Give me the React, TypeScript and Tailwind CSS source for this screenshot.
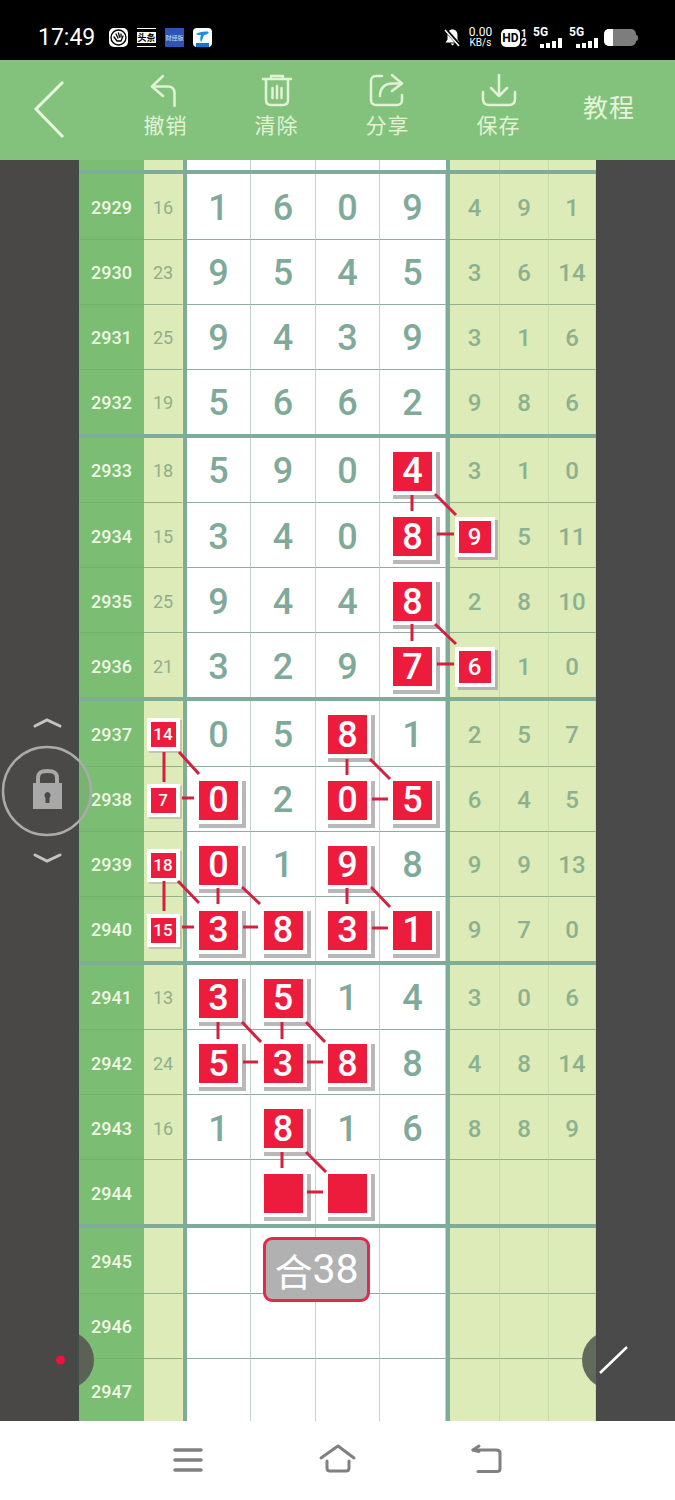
const cjk = "font-['Noto_Sans_CJK_SC',sans-serif]"

// "*" marks a red badge, a lone "*" is an empty badge
const groups: string[][][] = [
  [
    ["2929", "16", "1", "6", "0", "9", "4", "9", "1"],
    ["2930", "23", "9", "5", "4", "5", "3", "6", "14"],
    ["2931", "25", "9", "4", "3", "9", "3", "1", "6"],
    ["2932", "19", "5", "6", "6", "2", "9", "8", "6"],
  ],
  [
    ["2933", "18", "5", "9", "0", "*4", "3", "1", "0"],
    ["2934", "15", "3", "4", "0", "*8", "*9", "5", "11"],
    ["2935", "25", "9", "4", "4", "*8", "2", "8", "10"],
    ["2936", "21", "3", "2", "9", "*7", "*6", "1", "0"],
  ],
  [
    ["2937", "*14", "0", "5", "*8", "1", "2", "5", "7"],
    ["2938", "*7", "*0", "2", "*0", "*5", "6", "4", "5"],
    ["2939", "*18", "*0", "1", "*9", "8", "9", "9", "13"],
    ["2940", "*15", "*3", "*8", "*3", "*1", "9", "7", "0"],
  ],
  [
    ["2941", "13", "*3", "*5", "1", "4", "3", "0", "6"],
    ["2942", "24", "*5", "*3", "*8", "8", "4", "8", "14"],
    ["2943", "16", "1", "*8", "1", "6", "8", "8", "9"],
    ["2944", "", "", "*", "*", "", "", "", ""],
  ],
  [
    ["2945", "", "", "", "", "", "", "", ""],
    ["2946", "", "", "", "", "", "", "", ""],
    ["2947", "", "", "", "", "", "", "", ""],
  ],
]

// connector segments in page coordinates: x1, y1, x2, y2
const links = [
  [412, 495, 412, 511], [435, 494, 456, 515], [437, 534, 454, 534],
  [412, 624, 412, 641], [435, 624, 456, 644], [437, 664, 454, 664],
  [164, 752, 164, 782], [179, 752, 199, 774], [182, 798, 194, 798],
  [347, 759, 347, 775], [370, 759, 390, 779], [372, 799, 388, 799],
  [164, 881, 164, 911], [178, 881, 199, 903], [182, 927, 194, 927],
  [218, 888, 218, 904], [242, 887, 260, 904], [243, 927, 258, 927],
  [347, 888, 347, 904], [371, 887, 390, 907], [372, 928, 388, 928],
  [218, 1022, 218, 1039], [242, 1022, 261, 1042], [243, 1062, 258, 1062],
  [282, 1022, 282, 1039], [306, 1022, 325, 1042], [307, 1062, 323, 1062],
  [282, 1152, 282, 1168], [306, 1152, 326, 1172], [307, 1192, 323, 1192],
]

function Badge({ text, size }: { text: string; size: "sm" | "md" | "lg" }) {
  const sizes = {
    sm: "w-[33px] h-[33px] text-[17px] shadow-[2px_2px_0_#c2c6b4]",
    md: "w-[40px] h-[40px] text-[24px] shadow-[3px_3px_0_#b4b6ae]",
    lg: "w-[47px] h-[47px] text-[36px] shadow-[4px_4px_0_#b8b8b8]",
  }
  return (
    <div className={"relative z-10 flex shrink-0 items-center justify-center border-4 border-white bg-[#ee1c3c] font-medium leading-none text-white " + sizes[size]}>
      {text}
    </div>
  )
}

function Cell({ value, kind, line }: { value: string; kind: "sum" | "main" | "side"; line: boolean }) {
  const hit = value.startsWith("*")
  const styles = {
    sum: "bg-[#dcebb8] text-[18px] text-[#8fae8c] border-r-[#e6eeb4]",
    main: "bg-white text-[36px] font-medium text-[#7fa99a] border-r-[#c4d2ce]",
    side: "bg-[#dcebb8] text-[24px] font-medium text-[#8bb190] border-r-[#c5dca8]",
  }
  return (
    <div className={"flex items-center justify-center overflow-visible border-r pt-[3px] leading-none " + styles[kind] + (line ? (kind === "main" ? " border-t border-t-[#8eac9f]" : " border-t border-t-[#90b08a]") : "")}>
      {hit ? <Badge text={value.slice(1)} size={kind === "sum" ? "sm" : kind === "side" ? "md" : "lg"} /> : value}
    </div>
  )
}

const gridCols = "grid grid-cols-[65px_39px_4px_64px_65px_64px_66px_4px_50px_49px_47px]"

function Row({ row, line }: { row: string[]; line: boolean }) {
  const [num, sum, a, b, c, d, x, y, z] = row
  return (
    <div className={gridCols + " h-[64.875px]"}>
      <div className={"flex items-center justify-center bg-[#7cbd74] pt-[3px] text-[18px] font-medium leading-none text-[#eef8e2]" + (line ? " border-t border-t-[#74b16e]" : "")}>
        {num}
      </div>
      <Cell value={sum} kind="sum" line={line} />
      <div className="bg-[#7fac98]" />
      <Cell value={a} kind="main" line={line} />
      <Cell value={b} kind="main" line={line} />
      <Cell value={c} kind="main" line={line} />
      <Cell value={d} kind="main" line={line} />
      <div className="bg-[#7fac98]" />
      <Cell value={x} kind="side" line={line} />
      <Cell value={y} kind="side" line={line} />
      <Cell value={z} kind="side" line={line} />
    </div>
  )
}

function Spacer() {
  return (
    <div className={gridCols + " h-[10px]"}>
      <div className="bg-[#7cbd74]" />
      <div className="bg-[#dcebb8]" />
      <div className="bg-[#7fac98]" />
      <div className="bg-white border-r border-r-[#c4d2ce]" />
      <div className="bg-white border-r border-r-[#c4d2ce]" />
      <div className="bg-white border-r border-r-[#c4d2ce]" />
      <div className="bg-white" />
      <div className="bg-[#7fac98]" />
      <div className="bg-[#dcebb8] border-r border-r-[#c5dca8]" />
      <div className="bg-[#dcebb8] border-r border-r-[#c5dca8]" />
      <div className="bg-[#dcebb8]" />
    </div>
  )
}

function ToolButton({ label, children }: { label: string; children: React.ReactNode }) {
  return (
    <div className="flex w-[111px] flex-col items-center pt-[14px]">
      <div className="h-[36px] w-[40px]">{children}</div>
      <span className={cjk + " text-[21px] leading-[28px] tracking-[1px] text-[#e3f2d6]"}>{label}</span>
    </div>
  )
}

function Signal() {
  return (
    <div className="flex w-[29px] flex-col">
      <span className="text-[12px] font-bold leading-[11px] text-white">5G</span>
      <div className="flex items-end justify-end gap-[2px]">
        <div className="h-[4px] w-[4px] bg-white" />
        <div className="h-[5px] w-[4px] bg-white" />
        <div className="h-[7px] w-[4px] bg-white" />
        <div className="h-[10px] w-[4px] bg-white" />
      </div>
    </div>
  )
}

function StatusBar() {
  return (
    <div className="flex h-[60px] items-center bg-black pl-[38px] pr-[37px] pt-[15px] text-white">
      <span className="w-[71px] text-[23px] font-normal leading-none">17:49</span>
      <div className="flex items-center gap-[9px]">
        <svg width="19" height="19" viewBox="0 0 19 19">
          <rect width="19" height="19" rx="5" fill="#fff" />
          <circle cx="9.500" cy="9.500" r="7.500" fill="none" stroke="#000" strokeWidth="1.400" />
          <path d="M5 9l3 4h4l2-5M7 6l2 4M9.500 5l1 4M12 6l0 3" fill="none" stroke="#000" strokeWidth="1.300" strokeLinecap="round" />
        </svg>
        <div className="flex h-[19px] w-[19px] flex-col items-center justify-center border-y border-white bg-black">
          <span className={cjk + " bg-white text-[9px] font-bold leading-[11px] text-black"}>头条</span>
        </div>
        <div className={cjk + " flex h-[19px] w-[19px] items-center justify-center overflow-hidden bg-[#2c55b8] text-[6px] leading-none text-[#cfe0ff]"}>财经版</div>
        <svg width="19" height="19" viewBox="0 0 19 19">
          <rect width="19" height="19" rx="4" fill="#fff" />
          <path d="M3 6c3-2 9-3 13-2-1 2-3 3-5 3-1 3-2 5-3 7-1-2-1-4 0-7-2 0-4 0-5-1z" fill="#1590e8" />
          <rect x="3" y="15" width="13" height="4" fill="#1577d0" />
        </svg>
      </div>
      <div className="ml-auto flex items-center">
        <svg width="19" height="19" viewBox="0 0 19 19" className="mr-[6px]">
          <path d="M9.500 1.500c-3.500 0-5 2.500-5 6v4l-2 3h14l-2-3v-4c0-3.500-1.500-6-5-6zM7.500 15.500h4l-2 2z" fill="#fff" />
          <path d="M2 1l15 17" stroke="#000" strokeWidth="3.500" />
          <path d="M2 2l14 16" stroke="#fff" strokeWidth="1.500" />
        </svg>
        <div className="mr-[8px] flex w-[25px] flex-col items-center leading-none">
          <span className="text-[12px] leading-[11px]">0.00</span>
          <span className="text-[10px] leading-[10px]">KB/s</span>
        </div>
        <div className="flex h-[18px] w-[19px] items-center justify-center rounded-[5px] bg-white text-[12px] font-bold text-black">HD</div>
        <div className="ml-[1px] mr-[5px] flex w-[7px] flex-col text-[10px] font-bold leading-[9px]">
          <span>1</span>
          <span>2</span>
        </div>
        <Signal />
        <div className="w-[7px]" />
        <Signal />
        <div className="ml-[6px] flex h-[17px] w-[32px] overflow-hidden rounded-[5px] bg-[#7d7d7d]">
          <div className="w-[9px] bg-white" />
        </div>
        <div className="h-[6px] w-[2px] rounded-r-sm bg-[#7d7d7d]" />
      </div>
    </div>
  )
}

function Header() {
  return (
    <div className="flex h-[100px] items-start bg-[#82c27c]">
      <svg width="110" height="100" viewBox="0 0 110 100" className="shrink-0">
        <path d="M63 22 L36 49 L63 77" fill="none" stroke="#eaf6e0" strokeWidth="3" />
      </svg>
      <ToolButton label="撤销">
        <svg width="40" height="36" viewBox="0 0 40 36" fill="none" stroke="#e3f2d6" strokeWidth="2.500" strokeLinecap="round" strokeLinejoin="round">
          <path d="M17 2 L6 12.500 L17 22" />
          <path d="M6 12.500 H22 C26 12.500 28.500 15 28.500 19 V32" />
        </svg>
      </ToolButton>
      <ToolButton label="清除">
        <svg width="40" height="36" viewBox="0 0 40 36" fill="none" stroke="#e3f2d6" strokeWidth="2.500" strokeLinecap="round" strokeLinejoin="round">
          <path d="M6 5 H34" />
          <path d="M14 5 V2 H26 V5" />
          <path d="M9 6 V26 C9 29.500 11 31 14 31 H26 C29 31 31 29.500 31 26 V6" />
          <path d="M15.500 14 V24 M20 12 V24 M24.500 14 V24" />
        </svg>
      </ToolButton>
      <ToolButton label="分享">
        <svg width="40" height="36" viewBox="0 0 40 36" fill="none" stroke="#e3f2d6" strokeWidth="2.500" strokeLinecap="round" strokeLinejoin="round">
          <path d="M14 2 H8 C5 2 3 4 3 7 V26 C3 29 5 31 8 31 H29 C32 31 34 29 34 26 V21" />
          <path d="M24 1 L34 9.500 L24 17" />
          <path d="M33 9.500 H24 C17 9.500 12 14 12 22" />
        </svg>
      </ToolButton>
      <ToolButton label="保存">
        <svg width="40" height="36" viewBox="0 0 40 36" fill="none" stroke="#e3f2d6" strokeWidth="2.500" strokeLinecap="round" strokeLinejoin="round">
          <path d="M20 1 V21" />
          <path d="M12 14 L20 22 L28 14" />
          <path d="M4 18 V25 C4 29 6 31 10 31 H30 C34 31 36 29 36 25 V18" />
        </svg>
      </ToolButton>
      <span className={cjk + " ml-[29px] pt-[28px] text-[25px] leading-[36px] tracking-[1px] text-[#e6f4da]"}>教程</span>
    </div>
  )
}

function Board() {
  return (
    <div className="relative h-[1261px] overflow-hidden bg-white">
      <div className="flex h-full">
        <div className="w-[79px] shrink-0 border-r-[5px] border-r-[#434a48] bg-[#4a4747]" />
        <div className="relative w-[517px] shrink-0 overflow-hidden">
          <Spacer />
          {groups.map((group, g) => (
            <div key={g}>
              <div className="h-[4px] bg-[#7fac98]" />
              {group.map((row, r) => (
                <Row key={row[0]} row={row} line={r > 0} />
              ))}
            </div>
          ))}
          {/* floating buttons tucked behind the side panels */}
          <div className="absolute left-[-43px] top-[1171px] z-20 h-[58px] w-[58px] rounded-full bg-[#5c6156]" />
          <div className="absolute right-[-44px] top-[1171px] z-20 h-[58px] w-[58px] rounded-full bg-[#626a5c]" />
          <div className="absolute left-[184px] top-[1077px] z-20 flex h-[65px] w-[107px] items-center justify-center rounded-[9px] border-[3px] border-[#e2294c] bg-[#b1b1b1] text-[41px] leading-none text-white">
            <span className={cjk + " text-[38px]"}>合</span>38
          </div>
        </div>
        <div className="w-[79px] shrink-0 bg-[#4a4a4a]" />
      </div>

      <svg className="absolute left-0 top-0 z-20 h-[1261px] w-[675px]" viewBox="0 160 675 1261">
        {links.map(([x1, y1, x2, y2], i) => (
          <line key={i} x1={x1} y1={y1} x2={x2} y2={y2} stroke="#d3203f" strokeWidth="3" />
        ))}
        <path d="M35 726 L47 720 L60 726" fill="none" stroke="#c4c4c4" strokeWidth="3" strokeLinecap="round" />
        <path d="M35 855 L47 861 L60 855" fill="none" stroke="#c4c4c4" strokeWidth="3" strokeLinecap="round" />
        <circle cx="47" cy="791" r="44" fill="#55555518" stroke="#a9aca6" strokeWidth="2.500" />
        <path d="M38 784 V778 C38 772 42 771 47.500 771 C53 771 57 772 57 778 V784" fill="none" stroke="#a8a8a8" strokeWidth="4" />
        <path fillRule="evenodd" d="M33 783 H62 V809 H33 Z M47.500 792 A3.500 3.500 0 0 0 45.500 798 L45.500 803 H49.500 L49.500 798 A3.500 3.500 0 0 0 47.500 792 Z" fill="#a8a8a8" />
        <circle cx="60.500" cy="1360" r="4.500" fill="#f0123a" />
        <line x1="600" y1="1373" x2="627" y2="1347" stroke="#fff" strokeWidth="2.500" />
      </svg>
    </div>
  )
}

function NavBar() {
  return (
    <div className="flex h-[79px] items-start bg-white pl-[172px] pt-[23px]">
      <svg width="32" height="32" viewBox="0 0 32 32" fill="none" stroke="#808080" strokeWidth="3.500" strokeLinecap="round">
        <path d="M3 6 H29 M3 16 H29 M3 26 H29" />
      </svg>
      <svg width="40" height="32" viewBox="0 0 40 32" className="ml-[114px]" fill="none" stroke="#808080" strokeWidth="3" strokeLinecap="round" strokeLinejoin="round">
        <path d="M3 14 L20 2 L36 14" />
        <path d="M9 17 V24 C9 26.500 10 27 12 27 H28 C30 27 31 26.500 31 24 V17" />
      </svg>
      <svg width="36" height="32" viewBox="0 0 36 32" className="ml-[112px]" fill="none" stroke="#808080" strokeWidth="3" strokeLinecap="round" strokeLinejoin="round">
        <path d="M3 6 H26 C29 6 30 7 30 9 V25 C30 27 29 27.500 27 27.500 H8" />
        <path d="M9 2 L3 6 L9 7.500" />
      </svg>
    </div>
  )
}

export default function App() {
  return (
    <div className="flex h-[1500px] w-[675px] flex-col overflow-hidden font-['Roboto',sans-serif]">
      <StatusBar />
      <Header />
      <Board />
      <NavBar />
    </div>
  )
}
